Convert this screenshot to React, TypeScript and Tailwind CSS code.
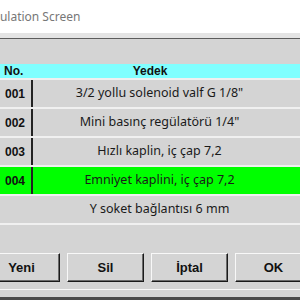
import React from "react";

const rows = [
  { no: "001", text: "3/2 yollu solenoid valf G 1/8\"", sel: false },
  { no: "002", text: "Mini basınç regülatörü 1/4\"", sel: false },
  { no: "003", text: "Hızlı kaplin, iç çap 7,2", sel: false },
  { no: "004", text: "Emniyet kaplini, iç çap 7,2", sel: true },
  { no: "", text: "Y soket bağlantısı 6 mm", sel: false },
];

const buttons = ["Yeni", "Sil", "İptal", "OK"];

export default function App() {
  return (
    <div className="w-[300px] h-[300px] overflow-hidden bg-[#d4d4d4] flex flex-col">
      <div className="h-[33px] bg-white flex items-center shrink-0">
        <span
          className="ml-[-21px] text-[12px] text-[#777777] whitespace-nowrap"
          style={{ fontFamily: '"Noto Sans", sans-serif' }}
        >
          Simulation Screen
        </span>
      </div>
      <div className="h-[5px] bg-[#e4e4e4] shrink-0" />
      <div className="h-[1px] bg-[#5c5c5c] shrink-0" />
      <div className="h-[25px] shrink-0" />
      <div
        className="relative h-[16px] bg-[#80ffff] border-b-2 border-[#f0f0f0] flex items-center shrink-0 text-[12px] font-bold text-[#111]"
        style={{ fontFamily: '"Liberation Sans", Arial, sans-serif' }}
      >
        <span className="pl-[4px] w-[33px]">No.</span>
        <span className="absolute left-0 right-0 text-center pointer-events-none">Yedek</span>
      </div>
      {rows.map((r) => (
        <div
          key={r.text}
          className={`h-[29px] flex border-b-2 border-[#f0f0f0] shrink-0 ${r.sel ? "bg-[#00ff00]" : "bg-[#d4d4d4]"}`}
        >
          <div
            className={`w-[33px] shrink-0 flex items-center pl-[5px] text-[12px] font-bold text-[#111] ${r.no ? "border-r-2 border-[#222]" : ""}`}
            style={{ fontFamily: '"Liberation Sans", Arial, sans-serif' }}
          >
            {r.no}
          </div>
          <div
            className="flex-1 flex items-center justify-center pr-[14px] text-[12.5px] text-[#1a1a1a] whitespace-nowrap"
            style={{ fontFamily: '"Noto Sans", sans-serif' }}
          >
            {r.text}
          </div>
        </div>
      ))}
      <div className="h-[28px] shrink-0" />
      <div className="flex gap-[7px] ml-[-17px] shrink-0">
        {buttons.map((b) => (
          <div
            key={b}
            className="w-[77px] h-[29px] shrink-0 flex items-center justify-center bg-[#d4d4d4] border border-t-[#f8f8f8] border-l-[#f8f8f8] border-r-[#1a1a1a] border-b-[#1a1a1a] shadow-[inset_-1px_-1px_0_#6a6a6a] text-[13px] font-bold text-[#111]"
            style={{ fontFamily: '"Liberation Sans", Arial, sans-serif' }}
          >
            {b}
          </div>
        ))}
      </div>
      <div className="h-[7px] shrink-0" />
      <div className="h-[1px] bg-[#f8f8f8] shrink-0" />
      <div className="h-[7px] shrink-0" />
      <div className="flex-1 bg-[#4a4a4a]" />
    </div>
  );
}
